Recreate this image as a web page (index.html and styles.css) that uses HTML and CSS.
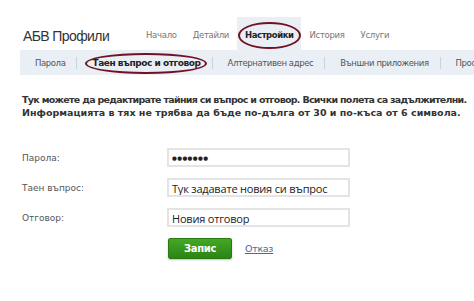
FILE: index.html
```html
<!DOCTYPE html>
<html lang="bg">
<head>
    <meta charset="UTF-8">
    <title>АБВ Профили</title>
    <link rel="stylesheet" href="styles.css">
</head>
<body>
    <div class="page">
        <div class="topbar">
            <div class="brand">АБВ Профили</div>
            <nav class="tabs">
                <a href="#">Начало</a>
                <a href="#">Детайли</a>
                <a href="#" class="active marked">Настройки</a>
                <a href="#">История</a>
                <a href="#">Услуги</a>
            </nav>
        </div>

        <nav class="subnav">
            <a href="#">Парола</a>
            <a href="#" class="current marked">Таен въпрос и отговор</a>
            <a href="#">Алтернативен адрес</a>
            <a href="#">Външни приложения</a>
            <a href="#" class="last">Профил</a>
        </nav>

        <p class="intro">
            <span class="line1">Тук можете да редактирате тайния си въпрос и отговор. Всички полета са задължителни.</span>
            <span>Информацията в тях не трябва да бъде по-дълга от 30 и по-къса от 6 символа.</span>
        </p>

        <form class="form">
            <div class="row">
                <label for="pass">Парола:</label>
                <input id="pass" type="text" class="dots" value="●●●●●●●">
            </div>
            <div class="row">
                <label for="question">Таен въпрос:</label>
                <input id="question" type="text" value="Тук задавате новия си въпрос">
            </div>
            <div class="row">
                <label for="answer">Отговор:</label>
                <input id="answer" type="text" value="Новия отговор">
            </div>
            <div class="actions">
                <button type="button" class="save">Запис</button>
                <a href="#" class="cancel">Отказ</a>
            </div>
        </form>
    </div>
</body>
</html>
```

FILE: styles.css
```css
body {
    margin: 0;
    padding: 0;
    background: #fff;
    font-family: "DejaVu Sans", Verdana, sans-serif;
    color: #333;
    overflow: hidden;
}

.page {
    width: 474px;
    height: 301px;
    padding-top: 17px;
    box-sizing: border-box;
    overflow: hidden;
}

.topbar {
    display: flex;
    align-items: stretch;
    height: 33px;
    padding-left: 23px;
}

.brand {
    font-family: "Liberation Sans", Arial, sans-serif;
    font-size: 14px;
    color: #333;
    width: 115px;
    padding-top: 11px;
    letter-spacing: -0.6px;
}

.tabs {
    display: flex;
}

.tabs a {
    position: relative;
    padding: 13px 8px 0;
    font-size: 8.5px;
    letter-spacing: -0.3px;
    color: #777;
    text-decoration: none;
}

.tabs a.active {
    background: #e9eff5;
    color: #222;
    font-weight: bold;
    letter-spacing: -0.45px;
}

.subnav {
    display: flex;
    align-items: center;
    height: 25px;
    margin-left: 20px;
    background: #e9eff5;
    white-space: nowrap;
    overflow: hidden;
}

.subnav a {
    position: relative;
    padding: 0 11px 0 15px;
    font-size: 8.5px;
    letter-spacing: -0.4px;
    color: #555;
    text-decoration: none;
    border-right: 1px solid #c9d3dc;
    line-height: 12px;
}

.subnav a.current {
    font-size: 9px;
    color: #222;
    font-weight: bold;
    letter-spacing: -0.45px;
}

.subnav a.last {
    border-right: none;
}

/* red hand-drawn marks */
.marked::after {
    content: "";
    position: absolute;
    border: 2px solid #701222;
    border-radius: 50%;
    pointer-events: none;
}

.tabs a.marked::after {
    left: 1px;
    right: 0;
    top: 5px;
    bottom: 1px;
}

.subnav a.marked::after {
    left: 8px;
    right: 5px;
    top: -4px;
    bottom: -5px;
}

.intro {
    margin: 18px 0 0 22px;
    font-size: 9.5px;
    font-weight: bold;
    line-height: 13px;
    color: #333;
    white-space: nowrap;
}

.intro span {
    display: block;
}

.intro .line1 {
    letter-spacing: -0.7px;
}

.form {
    margin: 29px 0 0 22px;
}

.row {
    display: flex;
    align-items: center;
    height: 19px;
    margin-bottom: 11px;
}

.row label {
    width: 145px;
    font-size: 9px;
    color: #555;
}

.row input {
    width: 183px;
    height: 19px;
    box-sizing: border-box;
    border: 2px solid #e4e4e4;
    padding: 1px 3px 0;
    font-family: "Open Sans", "DejaVu Sans", sans-serif;
    font-size: 11px;
    letter-spacing: -0.2px;
    color: #222;
    outline: none;
}

.row input.dots {
    font-family: "DejaVu Sans", sans-serif;
    font-size: 5.5px;
    letter-spacing: 0.4px;
}

.actions {
    display: flex;
    align-items: center;
    margin-left: 146px;
    margin-top: 9px;
}

.save {
    width: 64px;
    height: 21px;
    border: 1px solid #2a7a13;
    border-radius: 2px;
    background: linear-gradient(#44a825, #2c8414);
    color: #fff;
    font-family: "DejaVu Sans", Verdana, sans-serif;
    font-weight: bold;
    font-size: 10px;
    letter-spacing: -0.3px;
    box-shadow: 0 1px 2px rgba(0, 0, 0, 0.25);
}

.cancel {
    margin-left: 13px;
    font-size: 9.5px;
    letter-spacing: -0.3px;
    color: #3a6ea5;
}
```
